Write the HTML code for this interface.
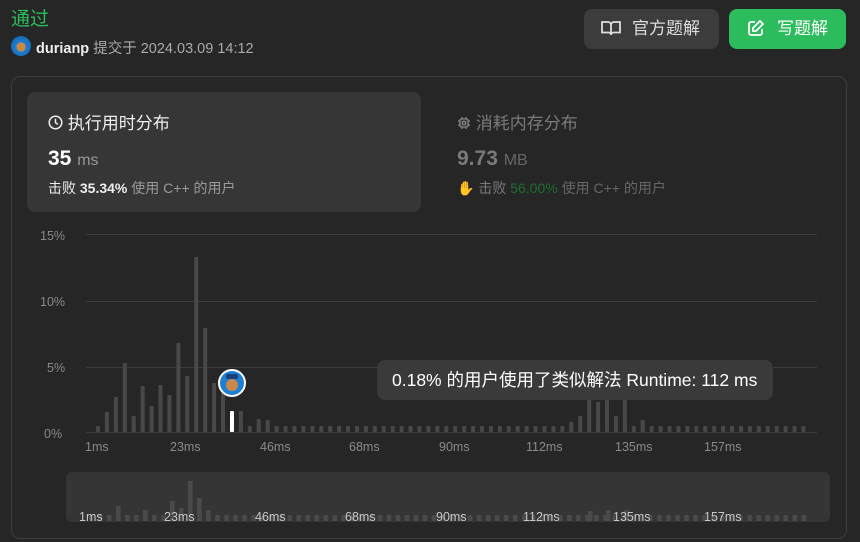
<!DOCTYPE html>
<html><head><meta charset="utf-8"><style>
*{margin:0;padding:0;box-sizing:border-box}
body{width:860px;height:542px;background:#262626;font-family:"Liberation Sans","Noto Sans CJK SC",sans-serif;position:relative;overflow:hidden;color:#eee}
.a{position:absolute;white-space:nowrap}
</style></head><body>
<div class="a" style="left:11px;top:4px;font-size:19px;color:#2cbb5d">通过</div>
<div class="a" style="left:11px;top:36px;width:20px;height:20px;border-radius:50%;background:radial-gradient(circle at 50% 55%,#c9874a 0 30%,#1e7fd0 32%,#0d5ea8 100%)"></div>
<div class="a" style="left:36px;top:37px;font-size:14.5px;color:#aaa"><b style="color:#eee">durianp</b> 提交于 2024.03.09 14:12</div>

<div class="a" style="left:584px;top:9px;width:135px;height:40px;border-radius:8px;background:#3c3c3c;font-size:17px;color:#ddd;line-height:40px;padding-left:16px">
<svg width="22" height="18" viewBox="0 0 22 18" style="vertical-align:-3px;margin-right:10px" fill="none" stroke="#ddd" stroke-width="1.8"><path d="M2 3h6a3 3 0 0 1 3 3v10a2.5 2.5 0 0 0-2.5-2.5H2zM20 3h-6a3 3 0 0 0-3 3v10a2.5 2.5 0 0 1 2.5-2.5H20z"/></svg>官方题解</div>
<div class="a" style="left:729px;top:9px;width:117px;height:40px;border-radius:8px;background:#2cbb5d;font-size:17px;color:#fff;line-height:40px;padding-left:18px">
<svg width="18" height="18" viewBox="0 0 18 18" style="vertical-align:-3px;margin-right:12px" fill="none" stroke="#fff" stroke-width="1.8"><path d="M8 3H4a2 2 0 0 0-2 2v9a2 2 0 0 0 2 2h9a2 2 0 0 0 2-2v-4"/><path d="M13 2l3 3-7 7H6V9z"/></svg>写题解</div>

<div class="a" style="left:11px;top:76px;width:836px;height:463px;border:1px solid #3e3e3e;border-radius:9px"></div>

<div class="a" style="left:27px;top:92px;width:394px;height:120px;border-radius:8px;background:#363636"></div>
<div class="a" style="left:48px;top:109px;font-size:17px;color:#eee">
<svg width="15" height="15" viewBox="0 0 16 16" style="vertical-align:-1px" fill="none" stroke="#eee" stroke-width="1.6"><circle cx="8" cy="8" r="6.7"/><path d="M8 4v4.3l2.6 1.7"/></svg> 执行用时分布</div>
<div class="a" style="left:48px;top:147px;font-size:21px;font-weight:bold;color:#fff">35 <span style="font-size:16px;font-weight:normal;color:#999">ms</span></div>
<div class="a" style="left:48px;top:178px;font-size:14px;color:#999"><span style="color:#eee">击败 <b>35.34%</b></span> 使用 C++ 的用户</div>

<div class="a" style="left:457px;top:109px;font-size:17px;color:#7a7a7a">
<svg width="14" height="14" viewBox="0 0 14 14" style="vertical-align:-1px" fill="none" stroke="#7a7a7a" stroke-width="1.6"><rect x="3" y="3" width="8" height="8" rx="1.5"/><rect x="5.5" y="5.5" width="3" height="3"/><path d="M5 1v2M9 1v2M5 11v2M9 11v2M1 5h2M1 9h2M11 5h2M11 9h2"/></svg> 消耗内存分布</div>
<div class="a" style="left:457px;top:147px;font-size:21px;font-weight:bold;color:#7a7a7a">9.73 <span style="font-size:16px;font-weight:normal;color:#666">MB</span></div>
<div class="a" style="left:457px;top:178px;font-size:14px;color:#666"><span style="color:#1e6e32">✋</span> <span style="color:#7a7a7a">击败</span> <span style="color:#1e6e32">56.00%</span> 使用 C++ 的用户</div>

<svg class="a" style="left:0;top:0" width="860" height="542">
<defs>
<pattern id="p" x="96" y="0" width="8.93" height="542" patternUnits="userSpaceOnUse"><rect x="0" y="426" width="4" height="6" rx="1" fill="#484848"/></pattern>
<pattern id="q" x="89" y="0" width="9.02" height="542" patternUnits="userSpaceOnUse"><rect x="0" y="515" width="4.5" height="6" rx="1" fill="#4a4a4a"/></pattern>
</defs>
<g stroke="#3c3c3c" stroke-width="1"><path d="M86 234.5H817M86 301.5H817M86 367.5H817M86 432.5H817"/></g>
<g font-size="12.5" fill="#8a8a8a"><text x="40" y="240">15%</text><text x="40" y="306">10%</text><text x="47" y="372">5%</text><text x="44" y="438">0%</text>
<text x="85" y="451">1ms</text><text x="170" y="451">23ms</text><text x="260" y="451">46ms</text><text x="349" y="451">68ms</text><text x="439" y="451">90ms</text><text x="526" y="451">112ms</text><text x="615" y="451">135ms</text><text x="704" y="451">157ms</text></g>
<rect x="96" y="420" width="712" height="12" fill="url(#p)"/>
<g fill="#484848">
<rect x="104.9" y="412" width="4" height="20"/><rect x="113.9" y="397" width="4" height="35"/><rect x="122.8" y="363" width="4" height="69"/><rect x="131.7" y="416" width="4" height="16"/><rect x="140.7" y="386" width="4" height="46"/><rect x="149.6" y="406" width="4" height="26"/><rect x="158.5" y="385" width="4" height="47"/><rect x="167.4" y="395" width="4" height="37"/><rect x="176.4" y="343" width="4" height="89"/><rect x="185.3" y="376" width="4" height="56"/><rect x="194.2" y="257" width="4" height="175"/><rect x="203.2" y="328" width="4" height="104"/><rect x="212.1" y="383" width="4" height="49"/><rect x="221" y="393" width="4" height="39"/><rect x="238.9" y="411" width="4" height="21"/><rect x="256.7" y="419" width="4" height="13"/><rect x="265.7" y="420" width="4" height="12"/>
<rect x="569.3" y="422" width="4" height="10"/><rect x="578.2" y="416" width="4" height="16"/><rect x="587.2" y="392" width="4" height="40"/><rect x="596.1" y="402" width="4" height="30"/><rect x="605" y="387" width="4" height="45"/><rect x="613.9" y="416" width="4" height="16"/><rect x="622.9" y="384" width="4" height="48"/><rect x="640.7" y="420" width="4" height="12"/>
</g>
<rect x="230" y="411" width="4" height="21" rx="1" fill="#fff"/>
<circle cx="232" cy="383" r="13" fill="#1e7fd0" stroke="#fff" stroke-width="2"/>
<circle cx="232" cy="385" r="6" fill="#c9874a"/><rect x="226" y="374" width="12" height="5" rx="2" fill="#1a3f7a"/>
<rect x="377" y="360" width="396" height="40" rx="8" fill="#3a3a3a"/>
<text x="392" y="386" font-size="17.5" fill="#fff">0.18% 的用户使用了类似解法 Runtime: 112 ms</text>
<rect x="66" y="472" width="764" height="50" rx="6" fill="#353535"/>
<rect x="89" y="510" width="720" height="11" fill="url(#q)"/>
<g fill="#4a4a4a">
<rect x="116" y="506" width="4.5" height="15"/><rect x="143" y="510" width="4.5" height="11"/><rect x="170" y="501" width="4.5" height="20"/><rect x="179" y="508" width="4.5" height="13"/><rect x="188" y="481" width="4.5" height="40"/><rect x="197" y="498" width="4.5" height="23"/><rect x="206" y="510" width="4.5" height="11"/><rect x="588" y="511" width="4.5" height="10"/><rect x="606" y="510" width="4.5" height="11"/><rect x="624" y="510" width="4.5" height="11"/>
</g>
<g font-size="12.5" fill="#c8c8c8"><text x="79" y="521">1ms</text><text x="164" y="521">23ms</text><text x="255" y="521">46ms</text><text x="345" y="521">68ms</text><text x="436" y="521">90ms</text><text x="523" y="521">112ms</text><text x="613" y="521">135ms</text><text x="704" y="521">157ms</text></g>
</svg>
</body></html>
